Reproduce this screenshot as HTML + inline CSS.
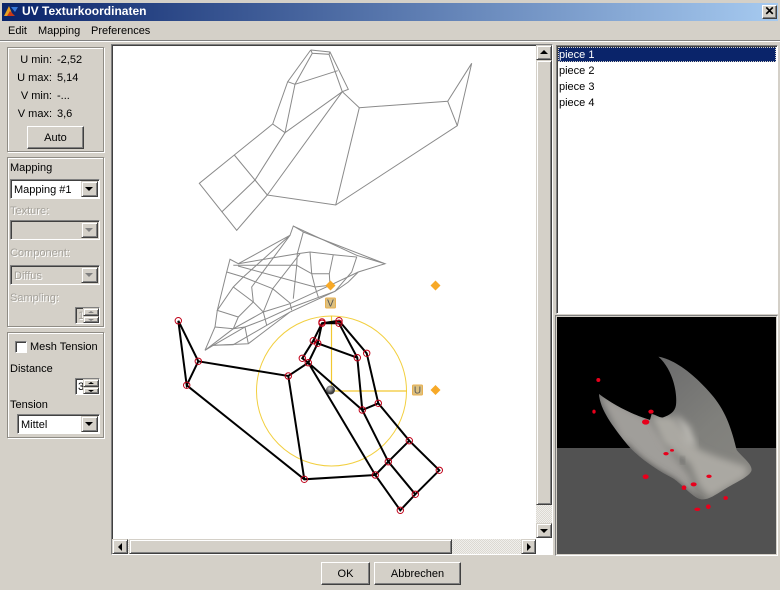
<!DOCTYPE html>
<html><head><meta charset="utf-8"><style>
html,body{margin:0;padding:0}
body{width:780px;height:590px;overflow:hidden;background:#d4d0c8;position:relative;font:11px "Liberation Sans",sans-serif;color:#000}
div,span{position:absolute;box-sizing:border-box;white-space:nowrap}
.t{line-height:14px;height:14px;margin-top:1px}
.g{color:#a5a29b;text-shadow:1px 1px 0 #fff}
.p{border:1px solid #8f8c85;box-shadow:inset 1px 1px 0 #fff,1px 1px 0 #fff}
.btn{background:#d4d0c8;border:1px solid;border-color:#fff #404040 #404040 #fff;box-shadow:inset -1px -1px 0 #808080;text-align:center}
.sb{background:#d4d0c8;border:1px solid;border-color:#d4d0c8 #404040 #404040 #d4d0c8;box-shadow:inset 1px 1px 0 #fff,inset -1px -1px 0 #808080}
.in{background:#fff;border:1px solid;border-color:#808080 #fff #fff #808080;box-shadow:inset 1px 1px 0 #404040}
.dis{background:#d4d0c8}
.ar{width:0;height:0;border-left:4px solid transparent;border-right:4px solid transparent;border-top:4px solid #000;left:3px;top:5px}
.au{width:0;height:0;border-left:4px solid transparent;border-right:4px solid transparent;border-bottom:4px solid #000;left:3px;top:5px}
.al{width:0;height:0;border-top:4px solid transparent;border-bottom:4px solid transparent;border-right:4px solid #000;left:5px;top:3px}
.arr{width:0;height:0;border-top:4px solid transparent;border-bottom:4px solid transparent;border-left:4px solid #000;left:6px;top:3px}
.su{width:0;height:0;border-left:3px solid transparent;border-right:3px solid transparent;border-bottom:2px solid #000;left:4px;top:2px}
.sd{width:0;height:0;border-left:3px solid transparent;border-right:3px solid transparent;border-top:2px solid #000;left:4px;top:2px}
.hatch{background-color:#e6e4df;background-image:repeating-conic-gradient(#dcd9d2 0 25%,#f0efec 0 50%);background-size:2px 2px}
</style></head><body>

<div style="left:2px;top:3px;width:776px;height:18px;background:linear-gradient(90deg,#0a246a,#a6caf0)"></div>
<svg style="position:absolute;left:3px;top:4px" width="16" height="14" viewBox="0 0 16 14"><path d="M1 12L6 2l4 10z" fill="#e8a020"/><path d="M4 12L7 7l5 5z" fill="#c83818"/><path d="M8 3h7l-3 5z" fill="#3878d8"/></svg>
<div class="t" style="left:22px;top:3px;color:#fff;font-weight:bold;font-size:12px">UV Texturkoordinaten</div>
<div class="btn" style="left:762px;top:5px;width:15px;height:14px;font:bold 12px/11px 'Liberation Sans',sans-serif">✕</div>

<div class="t" style="left:8px;top:23px">Edit</div>
<div class="t" style="left:38px;top:23px">Mapping</div>
<div class="t" style="left:91px;top:23px">Preferences</div>
<div style="left:0;top:40px;width:780px;height:2px;background:#808080;border-bottom:1px solid #fff"></div>

<div class="p" style="left:7px;top:47px;width:97px;height:105px"></div>
<div class="t" style="left:0;width:52px;text-align:right;top:52px">U min:</div><div class="t" style="left:57px;top:52px">-2,52</div>
<div class="t" style="left:0;width:52px;text-align:right;top:70px">U max:</div><div class="t" style="left:57px;top:70px">5,14</div>
<div class="t" style="left:0;width:52px;text-align:right;top:88px">V min:</div><div class="t" style="left:57px;top:88px">-...</div>
<div class="t" style="left:0;width:52px;text-align:right;top:106px">V max:</div><div class="t" style="left:57px;top:106px">3,6</div>
<div class="btn" style="left:27px;top:126px;width:57px;height:23px;line-height:22px">Auto</div>

<div class="p" style="left:7px;top:157px;width:97px;height:170px"></div>
<div class="t" style="left:10px;top:160px">Mapping</div>
<div class="in" style="left:10px;top:179px;width:90px;height:20px"><div class="t" style="left:3px;top:2px">Mapping #1</div><div class="sb" style="right:1px;top:1px;width:17px;height:16px"><div class="ar"></div></div></div>
<div class="t g" style="left:10px;top:203px">Texture:</div>
<div class="in dis" style="left:10px;top:220px;width:90px;height:20px"><div class="sb" style="right:1px;top:1px;width:17px;height:16px"><div class="ar" style="border-top-color:#808080"></div></div></div>
<div class="t g" style="left:10px;top:245px">Component:</div>
<div class="in dis" style="left:10px;top:265px;width:90px;height:20px"><div class="t g" style="left:3px;top:2px">Diffus</div><div class="sb" style="right:1px;top:1px;width:17px;height:16px"><div class="ar" style="border-top-color:#808080"></div></div></div>
<div class="t g" style="left:10px;top:290px">Sampling:</div>
<div class="in dis" style="left:75px;top:307px;width:25px;height:17px"><div class="t g" style="left:2px;top:0">1</div><div class="sb" style="right:0;top:0;width:16px;height:8px"><div class="su" style="border-bottom-color:#808080"></div></div><div class="sb" style="right:0;top:8px;width:16px;height:7px"><div class="sd" style="border-top-color:#808080"></div></div></div>

<div class="p" style="left:7px;top:332px;width:97px;height:106px"></div>
<div class="in" style="left:15px;top:341px;width:12px;height:12px"></div>
<div class="t" style="left:30px;top:339px">Mesh Tension</div>
<div class="t" style="left:10px;top:361px">Distance</div>
<div class="in" style="left:75px;top:378px;width:25px;height:17px"><div class="t" style="left:2px;top:0">3</div><div class="sb" style="right:0;top:0;width:16px;height:8px"><div class="su"></div></div><div class="sb" style="right:0;top:8px;width:16px;height:7px"><div class="sd"></div></div></div>
<div class="t" style="left:10px;top:397px">Tension</div>
<div class="in" style="left:17px;top:414px;width:83px;height:20px"><div class="t" style="left:3px;top:2px">Mittel</div><div class="sb" style="right:1px;top:1px;width:17px;height:16px"><div class="ar"></div></div></div>

<div style="left:111px;top:44px;width:442px;height:511px;background:#fff;border:1px solid;border-color:#808080 #fff #fff #808080;box-shadow:inset 1px 1px 0 #404040"></div>

<svg style="position:absolute;left:0;top:0" width="780" height="590" viewBox="0 0 780 590">
<g fill="none" stroke="#8a8a8a" stroke-width="1">
<path d="M310.7 50L330 52L348.3 89.3L342.3 91.7L359.3 107.7L447.7 101.3L471.7 63.3L457.3 125.7L335.7 205L267.3 195L236.7 230.300L199.3 183.3L234.3 155L272.7 124L287.7 81.7L310.7 50"/>
<path d="M447.7 101.3L457.3 125.7M359.3 107.7L335.7 205M287.7 81.7L295 84.3L285 132.7L272.7 124M285 132.7L342.3 91.7L267.3 195M285 132.7L255 180L221.7 212M234.3 155L255 180L267.3 195M295 84.3L337.7 70.7M310.7 50L312.3 53.3L329 54.3L330 52M312.3 53.3L295 84.3M329 54.3L342.3 91.7"/>
<path d="M205 350.300L215 327L217.3 310.3L226.7 272L230 259.3L238.3 263.7L290 235.300L293.3 226L356.7 255.300L385 263.7L358.3 272L348.3 282L335 291.300L290 312L248.3 343.7L213.3 345.3L205 350.300"/>
<path d="M238.3 263.7L297.3 253.7L310 252L333.3 254.7L356.7 257L351.7 272L335 291.300"/>
<path d="M303.3 232L385 263.7M303.3 232L297.3 253.7L296.7 265.3L293.3 298.7M293.300 226L303.300 232"/>
<path d="M233.3 265.300L296.7 265.3L311.7 273.7L315 287L318.3 297M311.7 273.7L310 252M311.7 273.7L329.3 273.7L333.3 254.7M329.3 273.7L330 285.3"/>
<path d="M238 266L315 287L330 285.300"/>
<path d="M226.7 272L243.3 277L272.7 288.7L290 303L291.7 310.3"/>
<path d="M290 235.300L243.3 277L233.3 287L217.3 310.3L238.3 317L253.300 302L251.7 287L290 235.300"/>
<path d="M233.3 287L253.3 302L263.3 312L266.7 325.3M300 253.7L272.7 288.7L263.3 312"/>
<path d="M238.3 317L233.3 328.7L215 327M233.3 328.7L245 327L248.3 343.7"/>
<path d="M205 350.3L233.3 328.7L263.3 312L290 303.7L330 285.3L358.3 272"/>
<path d="M213.3 345.3L245 327L266.7 318.7L290 308L335 291.300"/>
<path d="M213.3 345.300L233.3 344.7L266.7 325.3L290 312"/>
</g>

<circle cx="331.5" cy="391" r="75" fill="none" stroke="#f2cf40" stroke-width="1"/>
<path d="M331.5 391V316M331.5 391H407" fill="none" stroke="#f2c830" stroke-width="1.2"/>

<g fill="none" stroke="#000" stroke-width="2">
<path d="M178.3 320.7L198.3 361.3L186.7 385.3L178.3 320.7M198.3 361.3L288.3 376L308.3 362.7M288.3 376L304.3 479.3M186.7 385.3L304.3 479.3L375.3 475L400.3 510.3L415.3 494.3L439.3 470.3L409.3 440.7L378.3 403.3L366.7 353.3L339 320.7L322 323.3L313.3 340.7L302.3 358.3L308.3 362.7L317.7 343.3L322 323.3"/>
<path d="M339 323.3L357.3 357.7L362.3 410L378.3 403.3M357.3 357.7L317.7 343.3L313.3 340.7M308.3 362.7L375.3 475M308.3 362.7L362.3 410L388.3 461.7L415.3 494.3M375.3 475L388.3 461.7L409.3 440.7M322 323.3L339 323.3"/>
</g>
<g fill="none" stroke="#c00018" stroke-width="1">
<circle cx="178.3" cy="320.7" r="3.2"/><circle cx="198.3" cy="361.3" r="3.2"/><circle cx="186.7" cy="385.3" r="3.2"/><circle cx="288.3" cy="376" r="3.2"/><circle cx="308.3" cy="362.7" r="3.2"/><circle cx="302.3" cy="358.3" r="3.2"/><circle cx="313.3" cy="340.7" r="3.2"/><circle cx="317.7" cy="343.3" r="3.2"/><circle cx="322" cy="323.3" r="3.2"/><circle cx="322" cy="322" r="3.2"/><circle cx="339" cy="320.7" r="3.2"/><circle cx="339" cy="323.3" r="3.2"/><circle cx="357.3" cy="357.7" r="3.2"/><circle cx="366.7" cy="353.3" r="3.2"/><circle cx="362.3" cy="410" r="3.2"/><circle cx="378.3" cy="403.3" r="3.2"/><circle cx="409.3" cy="440.7" r="3.2"/><circle cx="439.3" cy="470.3" r="3.2"/><circle cx="415.3" cy="494.3" r="3.2"/><circle cx="400.3" cy="510.3" r="3.2"/><circle cx="375.3" cy="475" r="3.2"/><circle cx="388.3" cy="461.7" r="3.2"/><circle cx="304.3" cy="479.3" r="3.2"/>
</g>

<defs><radialGradient id="ball" cx=".4" cy=".35"><stop offset="0" stop-color="#c8c8c8"/><stop offset="1" stop-color="#3c3c3c"/></radialGradient></defs>
<circle cx="330.5" cy="390" r="4.5" fill="url(#ball)"/>
<path d="M435.5 385l5 5-5 5-5-5z M435.5 280.500l5 5-5 5-5-5z M330.500 280.500l5 5-5 5-5-5z" fill="#f7a928"/>
<rect x="412.500" y="385" width="10" height="10" rx="1" fill="#dcc080" stroke="#e8b050"/>
<rect x="325.500" y="298" width="10" height="10" rx="1" fill="#dcc080" stroke="#e8b050"/>
<text x="417.500" y="393.500" text-anchor="middle" font-family="Liberation Sans" font-size="10" fill="#555">U</text>
<text x="330.500" y="306.500" text-anchor="middle" font-family="Liberation Sans" font-size="10" fill="#555">V</text>
</svg>

<div class="hatch" style="left:536px;top:60px;width:16px;height:463px"></div>
<div class="sb" style="left:536px;top:45px;width:16px;height:15px"><div class="au" style="left:3px;top:4px"></div></div>
<div class="sb" style="left:536px;top:60px;width:16px;height:445px"></div>
<div class="sb" style="left:536px;top:523px;width:16px;height:15px"><div class="ar" style="left:3px;top:5px"></div></div>

<div class="hatch" style="left:128px;top:539px;width:393px;height:15px"></div>
<div class="sb" style="left:112px;top:539px;width:16px;height:15px"><div class="al"></div></div>
<div class="sb" style="left:129px;top:539px;width:323px;height:15px"></div>
<div class="sb" style="left:521px;top:539px;width:15px;height:15px"><div class="arr" style="left:5px"></div></div>

<div class="in" style="left:556px;top:45px;width:222px;height:269px"></div>
<div style="left:558px;top:47px;width:218px;height:15px;background:#0a246a;outline:1px dotted #d4d0c8;outline-offset:-1px"></div>
<div class="t" style="left:559px;top:47px;color:#fff">piece 1</div>
<div class="t" style="left:559px;top:63px">piece 2</div>
<div class="t" style="left:559px;top:79px">piece 3</div>
<div class="t" style="left:559px;top:95px">piece 4</div>

<div style="left:555px;top:315px;width:223px;height:241px;border:1px solid;border-color:#808080 #fff #fff #808080"></div>
<div style="left:557px;top:317px;width:219px;height:131px;background:#000"></div>
<div style="left:557px;top:448px;width:219px;height:106px;background:#525252"></div>
<svg style="position:absolute;left:550px;top:310px" width="230" height="250" viewBox="0 0 690 750">
<defs>
<clipPath id="sil"><path d="M325 140C380 150 440 200 490 260C530 310 545 360 560 420C575 440 605 460 605 480C600 500 560 515 520 540C495 555 475 570 455 568C430 565 400 525 370 505C320 480 260 440 225 395C190 350 150 300 147 252C190 285 250 315 300 330L305 312C320 315 330 325 340 322C360 315 375 305 378 285C382 250 370 180 325 140Z"/></clipPath>
<linearGradient id="tg" x1="0" y1="0" x2="1" y2="1"><stop offset="0" stop-color="#4c4c4c"/><stop offset=".3" stop-color="#6e6e6e"/><stop offset=".6" stop-color="#80807c"/><stop offset="1" stop-color="#8a8883"/></linearGradient>
<filter id="b2"><feGaussianBlur stdDeviation="10"/></filter>
</defs>
<g clip-path="url(#sil)">
<rect x="100" y="100" width="540" height="500" fill="url(#tg)"/>
<path d="M140 245L300 330L350 410L420 500L440 580L360 520L230 420Z" fill="#a09e9a" filter="url(#b2)"/>
<path d="M300 315L370 320L430 400L450 420L500 440L590 470L590 500L480 560L450 530L420 460L340 400Z" fill="#aaa8a2" filter="url(#b2)"/>
<path d="M375 310L420 350L440 410L410 400Z" fill="#b8b6b0" filter="url(#b2)"/>
<path d="M390 440L405 450L402 462L392 452Z" fill="#444" filter="url(#b2)"/>
<path d="M225 395C260 440 320 480 370 505C400 525 430 565 455 568L470 590L360 530L220 420Z" fill="#4a4a48" filter="url(#b2)"/>
</g>
<g fill="#e8001c">
<ellipse cx="145" cy="210" rx="6" ry="6"/><ellipse cx="132" cy="305" rx="5" ry="6"/><ellipse cx="303" cy="305" rx="8" ry="6"/><ellipse cx="287" cy="336" rx="11" ry="8"/><ellipse cx="348" cy="431" rx="8" ry="5"/><ellipse cx="366" cy="421" rx="6" ry="4"/><ellipse cx="287" cy="500" rx="9" ry="7"/><ellipse cx="477" cy="499" rx="8" ry="5"/><ellipse cx="431" cy="523" rx="9" ry="6"/><ellipse cx="402" cy="533" rx="7" ry="7"/><ellipse cx="527" cy="564" rx="7" ry="6"/><ellipse cx="475" cy="590" rx="7" ry="7"/><ellipse cx="442" cy="598" rx="9" ry="5"/>
</g>
</svg>

<div class="btn" style="left:321px;top:562px;width:49px;height:23px;line-height:22px">OK</div>
<div class="btn" style="left:374px;top:562px;width:87px;height:23px;line-height:22px">Abbrechen</div>
</body></html>
